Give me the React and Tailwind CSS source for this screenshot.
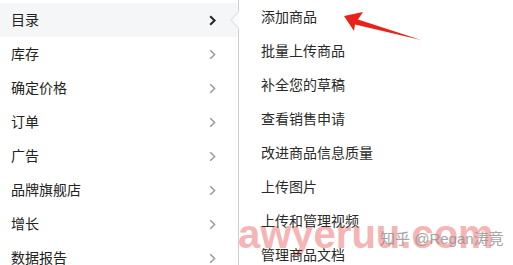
import React from 'react';

const leftItems = ['目录', '库存', '确定价格', '订单', '广告', '品牌旗舰店', '增长', '数据报告'];
const rightItems = [
  '添加商品',
  '批量上传商品',
  '补全您的草稿',
  '查看销售申请',
  '改进商品信息质量',
  '上传图片',
  '上传和管理视频',
  '管理商品文档',
];

const Chevron = ({ active }) => (
  <svg width="7" height="11" viewBox="0 0 7 11" fill="none">
    <polyline
      points="1.2,1.2 5.6,5.5 1.2,9.8"
      stroke={active ? '#222' : '#9a9a9a'}
      strokeWidth={active ? 2 : 1.5}
    />
  </svg>
);

export default function App() {
  return (
    <div
      className="relative w-[513px] h-[265px] overflow-hidden bg-white text-[14px] text-[#222]"
      style={{ fontFamily: '"Liberation Sans", "Noto Sans CJK SC", sans-serif' }}
    >
      {/* watermarks, under the menu text */}
      <div
        className="absolute left-[238px] top-[214px] text-[40px] font-bold leading-none text-[#f3a3a3] opacity-80"
        style={{ fontFamily: '"Liberation Sans", sans-serif' }}
      >
        awyeruu.com
      </div>
      <div className="absolute left-[380px] top-[231px] text-[15px] leading-none text-[#8f8f8f] opacity-80">
        知乎 @Regan涛竟
      </div>

      <div className="relative flex h-full">
        {/* left menu */}
        <div className="w-[238px] shrink-0 pt-[3px]">
          {leftItems.map((item, i) => (
            <div
              key={item}
              className={`h-[34px] flex items-center justify-between pl-[11px] pr-[22px] ${
                i === 0 ? 'bg-[#f4f6f7]' : ''
              }`}
            >
              <span>{item}</span>
              <Chevron active={i === 0} />
            </div>
          ))}
        </div>

        {/* sub menu */}
        <div className="flex-1 flex flex-col">
          <div className="h-[3px] bg-[#2b3035]" />
          <div className="flex-1 border-l border-[#cfcfcf]">
            {rightItems.map((item) => (
              <div key={item} className="h-[34px] flex items-center pl-[22px] text-[#2a2a2a]">
                {item}
              </div>
            ))}
          </div>
        </div>
      </div>

      {/* popover caret */}
      <svg className="absolute left-[226px] top-[9px]" width="14" height="22" viewBox="0 0 14 22">
        <polygon points="13,1 4,11 13,21" fill="#e4e6e8" />
        <polygon points="13,3 6,11 13,19" fill="#fbfbfb" />
      </svg>

      {/* red annotation arrow */}
      <svg className="absolute left-0 top-0" width="513" height="265" viewBox="0 0 513 265">
        <polygon
          points="344,16 363,12 358,19.5 421,40 355,24.5 354,31"
          fill="#e8221b"
        />
      </svg>
    </div>
  );
}
